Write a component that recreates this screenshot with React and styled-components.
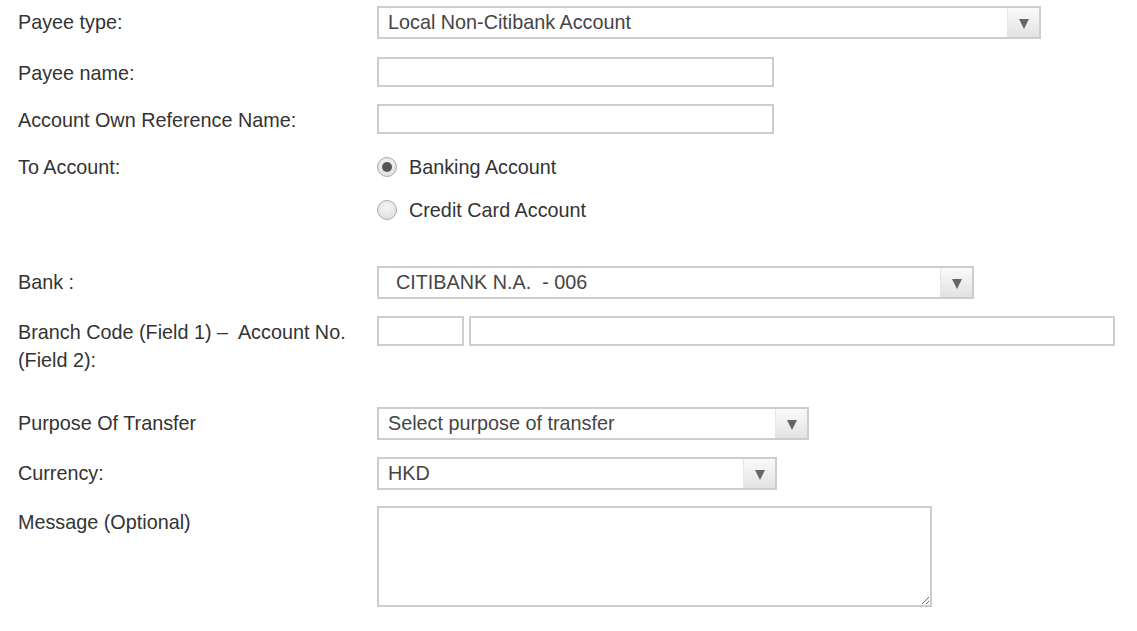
import styled, { createGlobalStyle } from 'styled-components';

const GlobalStyle = createGlobalStyle`
	body {
		margin: 0;
		background: #fff;
		font-family: 'Liberation Sans', Arial, sans-serif;
	}
`;

// layout
const Form = styled.form`
	padding: 6px 0 0 18px;
	width: 1100px;
`;

const Row = styled.div`
	display: grid;
	grid-template-columns: 359px 1fr;
	align-items: start;
	margin-bottom: ${(props) => props.gap}px;
`;

const Label = styled.div`
	padding-top: 2px;
	padding-right: 10px;
	font-size: 19.8px;
	line-height: 28px;
	color: #333;
`;

// controls
const SelectBox = styled.div`
	display: flex;
	align-items: stretch;
	box-sizing: border-box;
	width: ${(props) => props.width}px;
	height: ${(props) => props.height || 33}px;
	border: 2px solid #cdcdcd;
	background: #fff;
	cursor: pointer;
`;

const SelectText = styled.div`
	flex: 1;
	display: flex;
	align-items: center;
	padding-left: ${(props) => props.indent || 9}px;
	font-size: 19.8px;
	color: #454545;
	white-space: pre;
`;

const ArrowBox = styled.div`
	width: 31px;
	display: flex;
	align-items: center;
	justify-content: center;
	border-left: 1px solid #e4e4e4;
	background: linear-gradient(to bottom, #fafafa, #e2e2e2);

	&::after {
		content: '';
		border-left: 5px solid transparent;
		border-right: 5px solid transparent;
		border-top: 10px solid #666;
		margin-top: 2px;
	}
`;

const TextInput = styled.input`
	box-sizing: border-box;
	width: ${(props) => props.width}px;
	height: 30px;
	margin: 0;
	border: 2px solid #cdcdcd;
	font-family: inherit;
	font-size: 18px;
	padding: 0 8px;
	outline: none;
`;

const InputPair = styled.div`
	display: flex;
	gap: 5px;
`;

const TextArea = styled.textarea`
	box-sizing: border-box;
	display: block;
	width: 555px;
	height: 101px;
	margin: 0;
	border: 2px solid #cdcdcd;
	font-family: inherit;
	font-size: 18px;
	outline: none;
`;

const RadioGroup = styled.div`
	display: flex;
	flex-direction: column;
	gap: 15px;
	padding-top: 2px;
`;

const RadioItem = styled.label`
	display: flex;
	align-items: center;
	gap: 12px;
	font-size: 19.8px;
	line-height: 28px;
	color: #333;
	cursor: pointer;
`;

const RadioDot = styled.span`
	box-sizing: border-box;
	width: 20px;
	height: 20px;
	border-radius: 50%;
	border: 1px solid #a9a9a9;
	background: radial-gradient(circle at 50% 35%, #f4f4f4, #dcdcdc);
	display: flex;
	align-items: center;
	justify-content: center;

	&::after {
		content: '';
		width: 10px;
		height: 10px;
		border-radius: 50%;
		background: ${(props) => (props.checked ? '#555' : 'transparent')};
	}
`;

const Select = ({ value, width, indent }) => (
	<SelectBox width={width}>
		<SelectText indent={indent}>{value}</SelectText>
		<ArrowBox />
	</SelectBox>
);

const App = () => {
	return (
		<>
			<GlobalStyle />
			<Form>
				<Row gap={18}>
					<Label>Payee type:</Label>
					<Select value='Local Non-Citibank Account' width={664} />
				</Row>
				<Row gap={17}>
					<Label>Payee name:</Label>
					<TextInput type='text' width={397} />
				</Row>
				<Row gap={17}>
					<Label>Account Own Reference Name:</Label>
					<TextInput type='text' width={397} />
				</Row>
				<Row gap={42}>
					<Label>To Account:</Label>
					<RadioGroup>
						<RadioItem>
							<RadioDot checked />
							Banking Account
						</RadioItem>
						<RadioItem>
							<RadioDot />
							Credit Card Account
						</RadioItem>
					</RadioGroup>
				</Row>
				<Row gap={17}>
					<Label>Bank :</Label>
					<Select value='CITIBANK N.A.  - 006' width={597} indent={17} />
				</Row>
				<Row gap={33}>
					<Label>Branch Code (Field 1) –&nbsp; Account No. (Field 2):</Label>
					<InputPair>
						<TextInput type='text' width={87} />
						<TextInput type='text' width={646} />
					</InputPair>
				</Row>
				<Row gap={17}>
					<Label>Purpose Of Transfer</Label>
					<Select value='Select purpose of transfer' width={432} />
				</Row>
				<Row gap={16}>
					<Label>Currency:</Label>
					<Select value='HKD' width={400} />
				</Row>
				<Row gap={0}>
					<Label>Message (Optional)</Label>
					<TextArea />
				</Row>
			</Form>
		</>
	);
};

export default App;
